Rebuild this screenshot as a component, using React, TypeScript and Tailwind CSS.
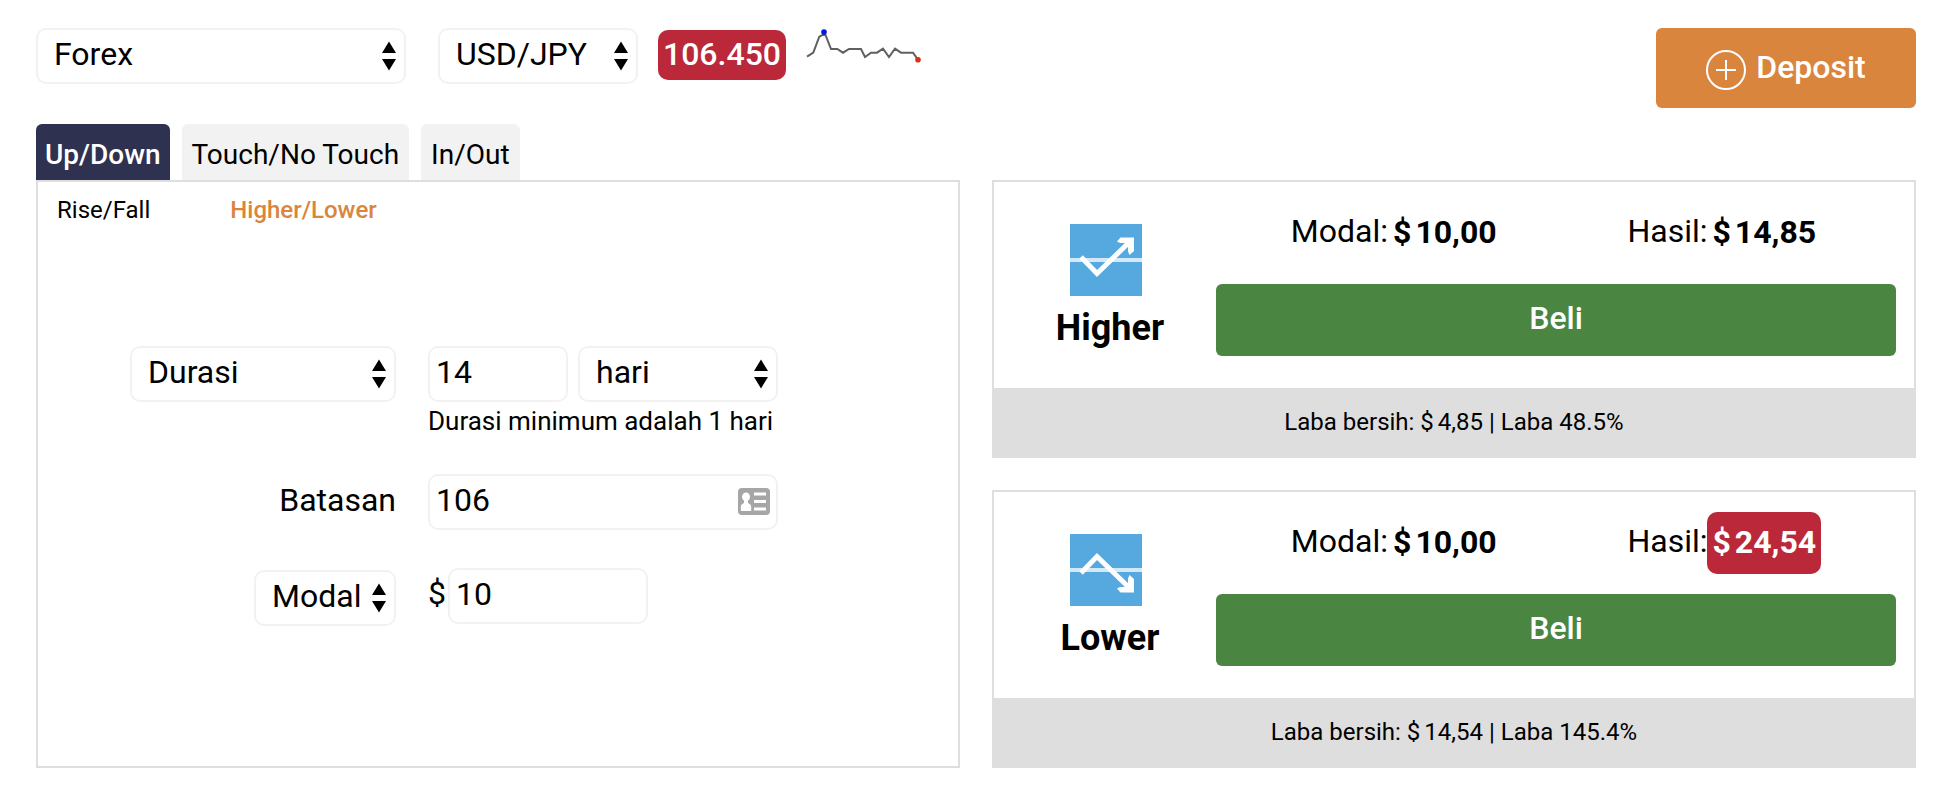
import type { ReactNode } from "react";

function SelectBox({
  id,
  label,
  options,
  className,
}: {
  id: string;
  label: string;
  options: string[];
  className: string;
}) {
  return (
    <div className={`relative shrink-0 ${className}`}>
      <select
        id={id}
        aria-label={label}
        className="block h-14 w-full appearance-none rounded-[10px] border-2 border-[#f2f2f2] bg-white pr-7 pb-1 pl-4 text-[32px] leading-10 text-black"
      >
        {options.map((o) => (
          <option key={o}>{o}</option>
        ))}
      </select>
      <svg
        aria-hidden="true"
        viewBox="0 0 14 30"
        className="pointer-events-none absolute top-[13px] right-2.5 h-[30px] w-3.5"
      >
        <path d="M7 0.5 14 12H0zM0 18h14L7 29.5z" fill="#000" />
      </svg>
    </div>
  );
}

function TextField({
  id,
  label,
  value,
  className,
}: {
  id: string;
  label: string;
  value: string;
  className: string;
}) {
  return (
    <input
      id={id}
      aria-label={label}
      defaultValue={value}
      className={`block h-14 rounded-[10px] border-2 border-[#f2f2f2] bg-white px-1.5 pb-1 text-[32px] text-black ${className}`}
    />
  );
}

function Money({ amount }: { amount: string }) {
  return (
    <>
      <span className="mr-1">$</span>
      {amount}
    </>
  );
}

function Sparkline() {
  return (
    <svg aria-hidden="true" viewBox="0 0 116 40" className="ml-5 h-10 w-[116px] shrink-0">
      <polyline
        points="1,28.7 7.3,24.7 13.3,8.7 19,5.7 25,21 31.3,21 37,24.7 43,21 55,21 59,29 65,24.7 71,24.7 77,20.7 83,29 89,20.7 95,24.7 107,24.7 112,31.7"
        fill="none"
        stroke="#606060"
        strokeWidth="2"
      />
      <circle cx="18" cy="4" r="2.8" fill="#0018e8" />
      <circle cx="112" cy="31.8" r="2.8" fill="#d8301c" />
    </svg>
  );
}

function IdCardIcon() {
  return (
    <svg
      aria-hidden="true"
      viewBox="0 0 32 27"
      className="pointer-events-none absolute top-3.5 right-2 h-[27px] w-8"
    >
      <rect width="32" height="27" rx="4" fill="#a6a6a6" />
      <ellipse cx="8" cy="8.800" rx="4" ry="4.400" fill="#fff" />
      <path d="M6 12h4v3c2 .8 3.200 2 3.200 4.500V23H2.800v-3.500C2.800 17 4 15.800 6 15z" fill="#fff" />
      <path d="M16 4.500h12v3H16zM16 12h12v3H16zM16 19.500h12v3H16z" fill="#fff" />
    </svg>
  );
}

function TrendIcon({ down }: { down?: boolean }) {
  return (
    <svg aria-hidden="true" viewBox="0 0 72 72" className="mt-[22px] mr-2 size-[72px]">
      <rect width="72" height="72" fill="#55a9de" />
      <rect y="34" width="72" height="4" fill="#fff" opacity="0.75" />
      <g transform={down ? "matrix(1 0 0 -1 0 72)" : undefined}>
        <path d="M11 33 27 49.500 60 17.500" fill="none" stroke="#fff" strokeWidth="5" />
        <path
          d="M47 17.500 50.500 13.500H64V27L59.500 31 58 27.500V22L55 19H50z"
          fill="#fff"
        />
      </g>
    </svg>
  );
}

function Quote({
  label,
  className,
  children,
}: {
  label: string;
  className: string;
  children: ReactNode;
}) {
  return (
    <div className="flex items-center text-[32px] leading-[38px]">
      <span className="pb-1">{label}</span>
      <strong className={`rounded-[10px] px-[5px] pt-[11px] pb-[13px] font-bold ${className}`}>
        {children}
      </strong>
    </div>
  );
}

function ContractCard({
  name,
  down,
  payout,
  profit,
  percent,
}: {
  name: string;
  down?: boolean;
  payout: string;
  profit: string;
  percent: string;
}) {
  return (
    <section className="border-2 border-[#dedede] bg-white">
      <div className="flex pt-5 pr-[18px] pb-8">
        <div className="flex w-[222px] shrink-0 flex-col items-center pl-2.5">
          <TrendIcon down={down} />
          <h2 className="mt-3 text-4xl leading-10 font-bold">{name}</h2>
        </div>
        <div className="flex grow flex-col gap-5">
          <div className="flex justify-around px-3">
            <Quote label="Modal:" className="text-black">
              <Money amount="10,00" />
            </Quote>
            <Quote label="Hasil:" className={down ? "bg-[#ba2839] text-white" : "text-black"}>
              <Money amount={payout} />
            </Quote>
          </div>
          <button
            type="button"
            className="h-[72px] w-full rounded-md bg-[#4a8641] pb-1 text-[32px] font-medium text-white"
          >
            Beli
          </button>
        </div>
      </div>
      <p className="bg-[#dedede] py-[18px] text-center text-2xl leading-8">
        Laba bersih: <Money amount={profit} /> | Laba {percent}
      </p>
    </section>
  );
}

export default function App() {
  return (
    <main className="bg-white pt-7 pr-7 pb-8 pl-9 font-['Roboto',sans-serif] text-black">
      <header className="flex items-start">
        <SelectBox id="market" label="Market" options={["Forex"]} className="w-[370px]" />
        <SelectBox id="pair" label="Pair" options={["USD/JPY"]} className="ml-8 w-[200px]" />
        <output className="mt-0.5 ml-5 w-32 rounded-[10px] bg-[#ba2839] pt-[5px] pb-[7px] text-center text-[32px] leading-[38px] font-medium text-white">
          106.450
        </output>
        <Sparkline />
        <button
          type="button"
          className="ml-auto flex h-20 w-[260px] items-center justify-center gap-2.5 rounded-md bg-[#da853e] text-[32px] font-medium text-white"
        >
          <svg aria-hidden="true" viewBox="0 0 40 40" className="mt-1 size-10">
            <circle cx="20" cy="20" r="19" fill="none" stroke="#fff" strokeWidth="2" />
            <path d="M20 10v20M10 20h20" stroke="#fff" strokeWidth="2" />
          </svg>
          <span className="pb-0.5">Deposit</span>
        </button>
      </header>

      <nav className="mt-4 flex gap-3 text-[28px] leading-8">
        <a
          href="#updown"
          className="rounded-t-md bg-[#2e3150] px-[9px] pt-[15px] pb-[9px] font-medium text-white"
        >
          Up/Down
        </a>
        <a href="#touch" className="rounded-t-md bg-[#f2f2f2] px-2.5 pt-[15px] pb-[9px]">
          Touch/No Touch
        </a>
        <a href="#inout" className="rounded-t-md bg-[#f2f2f2] px-2.5 pt-[15px] pb-[9px]">
          In/Out
        </a>
      </nav>

      <div className="grid grid-cols-2 gap-8">
        <section className="border-2 border-[#dedede]">
          <nav className="flex gap-20 px-[19px] pt-3 text-2xl leading-8">
            <a href="#risefall">Rise/Fall</a>
            <a href="#higherlower" className="font-medium text-[#da853e]">
              Higher/Lower
            </a>
          </nav>
          <form className="mt-30 grid grid-cols-[358px_1fr] gap-x-8 text-[32px]">
            <div className="flex justify-end">
              <SelectBox id="expiry" label="Expiry" options={["Durasi"]} className="w-[266px]" />
            </div>
            <div>
              <div className="flex gap-2.5">
                <TextField id="amount" label="Durasi" value="14" className="w-[140px]" />
                <SelectBox id="unit" label="Unit" options={["hari"]} className="w-[200px]" />
              </div>
              <p className="mt-1 mb-0.5 text-[26px] leading-[30px]">Durasi minimum adalah 1 hari</p>
            </div>

            <label htmlFor="barrier" className="mt-9 pt-[7px] text-right leading-[38px]">
              Batasan
            </label>
            <div className="relative mt-9 w-[350px]">
              <TextField id="barrier" label="Batasan" value="106" className="w-full" />
              <IdCardIcon />
            </div>

            <div className="mt-10 flex justify-end">
              <SelectBox id="basis" label="Basis" options={["Modal"]} className="w-[142px]" />
            </div>
            <div className="mt-[38px] flex gap-0.5">
              <label htmlFor="stake" className="pt-1.5 leading-[38px]">
                $
              </label>
              <TextField id="stake" label="Modal" value="10" className="w-[200px]" />
            </div>
          </form>
        </section>

        <div className="flex flex-col gap-8">
          <ContractCard name="Higher" payout="14,85" profit="4,85" percent="48.5%" />
          <ContractCard name="Lower" down payout="24,54" profit="14,54" percent="145.4%" />
        </div>
      </div>
    </main>
  );
}
